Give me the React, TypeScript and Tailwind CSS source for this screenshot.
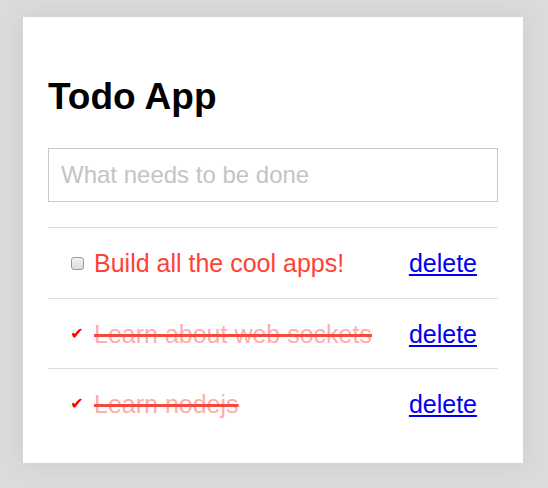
import { useState } from "react";

type Todo = { id: number; text: string; done: boolean };

const initialTodos: Todo[] = [
  { id: 1, text: "Build all the cool apps!", done: false },
  { id: 2, text: "Learn about web sockets", done: true },
  { id: 3, text: "Learn nodejs", done: true },
];

export default function App() {
  const [todos, setTodos] = useState(initialTodos);
  const [draft, setDraft] = useState("");

  const toggle = (id: number) =>
    setTodos((list) => list.map((t) => (t.id === id ? { ...t, done: !t.done } : t)));
  const remove = (id: number) => setTodos((list) => list.filter((t) => t.id !== id));

  return (
    <div className="min-h-[488px] w-full bg-[#dbdbdb] pt-[17px] pb-[25px] font-['Liberation_Sans',Arial,sans-serif]">
      <div className="mx-auto w-[500px] h-[446px] bg-white px-[25px] pt-[62px] pb-[24px] shadow-[0_0_24px_rgba(0,0,0,0.07)] relative left-[-1px]">
        <h1 className="text-[37px] leading-[36px] font-bold text-black">Todo App</h1>

        <form
          className="mt-[33px]"
          onSubmit={(e) => {
            e.preventDefault();
            if (!draft.trim()) return;
            setTodos((list) => [...list, { id: Date.now(), text: draft, done: false }]);
            setDraft("");
          }}
        >
          <input
            value={draft}
            onChange={(e) => setDraft(e.target.value)}
            placeholder="What needs to be done"
            className="block w-full h-[54px] border border-[#c8c8c8] px-[12px] text-[24px] text-black placeholder:text-[#c4c4c4] outline-none"
          />
        </form>

        <ul className="mt-[25px]">
          {todos.map((todo, i) => (
            <li
              key={todo.id}
              className={`flex items-center ${i === 0 ? "h-[71px]" : "h-[70px]"} border-t border-[#dddddd] pl-[22px] pr-[21px]`}
            >
              <button
                onClick={() => toggle(todo.id)}
                className="w-[14px] h-[14px] flex items-center justify-center mr-[10px] shrink-0"
              >
                {todo.done ? (
                  <span className="text-[16px] leading-none text-[#ff0000] italic font-['DejaVu_Sans',sans-serif]">
                    ✔
                  </span>
                ) : (
                  <span className="block w-[13px] h-[13px] rounded-[3px] border border-[#9a9a9a] bg-gradient-to-b from-[#f4f4f4] to-[#dcdcdc]" />
                )}
              </button>
              <span
                className={`text-[25px] leading-[30px] ${
                  todo.done
                    ? "text-[#ffaea8] line-through decoration-[#f24a3e] decoration-[3px]"
                    : "text-[#ff4136]"
                }`}
              >
                {todo.text}
              </span>
              <a
                href="#"
                onClick={(e) => {
                  e.preventDefault();
                  remove(todo.id);
                }}
                className="ml-auto text-[25px] leading-[30px] text-[#0000ee] underline"
              >
                delete
              </a>
            </li>
          ))}
        </ul>
      </div>
    </div>
  );
}
